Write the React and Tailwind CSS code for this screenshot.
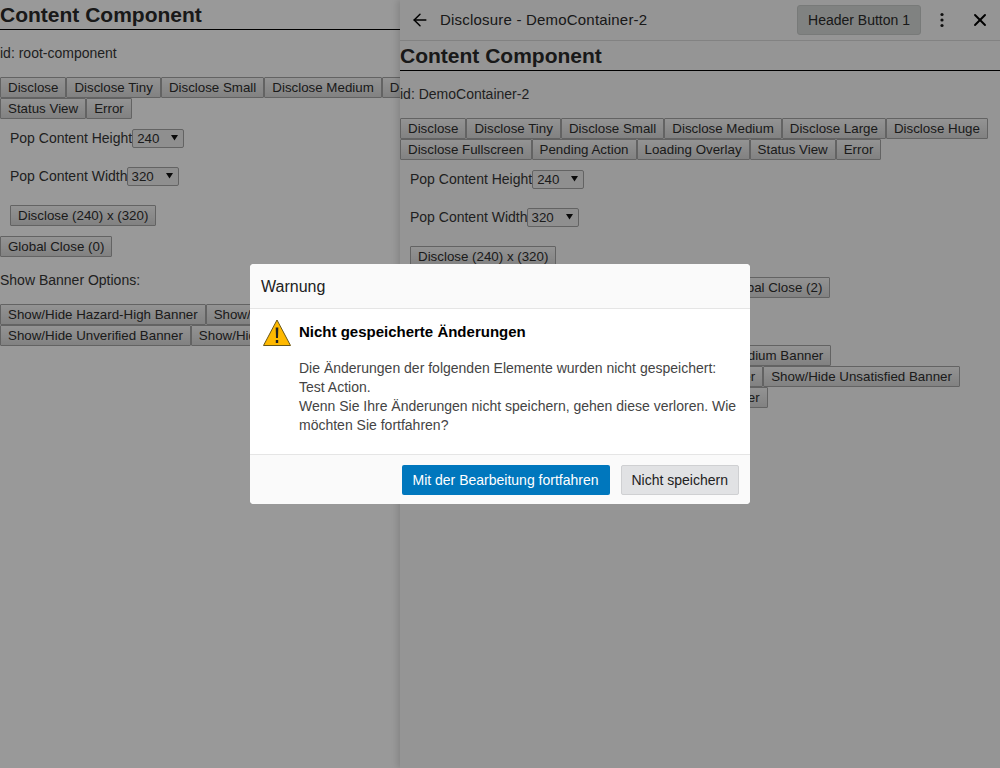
import { ArrowLeft, X } from 'lucide-react';

const sans = 'font-["Liberation_Sans",Arial,sans-serif]';

const mainButtons = ['Disclose', 'Disclose Tiny', 'Disclose Small', 'Disclose Medium', 'Disclose Large', 'Disclose Huge', 'Disclose Fullscreen', 'Pending Action', 'Loading Overlay', 'Status View', 'Error'];
const bannerButtons = ['Show/Hide Hazard-High Banner', 'Show/Hide Hazard-Medium Banner', 'Show/Hide Hazard-Low Banner', 'Show/Hide Error Banner', 'Show/Hide Unsatisfied Banner', 'Show/Hide Unverified Banner', 'Show/Hide Custom Banner'];

const DemoButton = ({ children, className = '' }) => (
  <button className={`h-[21px] px-[7px] border border-[#a6a6a6] rounded-[1px] bg-linear-to-b from-[#f6f6f6] to-[#d8d8d8] text-[13.33px] leading-[19px] text-[#2e2e2e] whitespace-nowrap ${className}`}>
    {children}
  </button>
);

const SizeSelect = ({ value, width }) => (
  <span className={`relative inline-block h-[19px] ${width}`}>
    <select defaultValue={value} className="appearance-none block w-full h-full pl-[4px] border border-[#a6a6a6] rounded-[2px] bg-[#efefef] text-[13.33px] leading-[17px] text-[#2e2e2e]">
      <option>{value}</option>
    </select>
    <svg className="absolute right-[6px] top-[5px]" width="7" height="7" viewBox="0 0 7 7">
      <path d="M0 1h7L3.5 6.5z" fill="#111" />
    </svg>
  </span>
);

const ContentComponent = ({ id, closeCount, closeOffset = '' }) => (
  <div className="text-[14px] text-[#363636]">
    <h2 className="h-[30px] border-b border-black text-[21px] leading-[29px] font-bold text-[#2a2a2a]">Content Component</h2>
    <p className="mt-[15px] h-[16px] leading-[16px]">id: {id}</p>
    <div className="mt-[16px] flex flex-wrap">
      {mainButtons.map((label) => (
        <DemoButton key={label}>{label}</DemoButton>
      ))}
    </div>
    <div className="mt-[10px] pl-[10px] flex items-center h-[19px]">
      <span>Pop Content Height</span>
      <SizeSelect value="240" width="w-[52px]" />
    </div>
    <div className="mt-[19px] pl-[10px] flex items-center h-[19px]">
      <span className="-mr-px">Pop Content Width</span>
      <SizeSelect value="320" width="w-[52px]" />
    </div>
    <div className="mt-[19px] pl-[10px] flex">
      <DemoButton>Disclose (240) x (320)</DemoButton>
    </div>
    <div className="mt-[10px] flex">
      <DemoButton className={closeOffset}>Global Close ({closeCount})</DemoButton>
    </div>
    <p className="mt-[15px] h-[16px] leading-[16px]">Show Banner Options:</p>
    <div className="mt-[16px] flex flex-wrap">
      {bannerButtons.map((label) => (
        <DemoButton key={label}>{label}</DemoButton>
      ))}
    </div>
  </div>
);

const WarningIcon = () => (
  <svg width="30" height="28" viewBox="0 0 30 28" className="shrink-0">
    <path d="M15 1 L28.5 26.5 H1.5 Z" fill="#ffb900" stroke="#6b5716" strokeWidth="1" strokeLinejoin="miter" />
    <path d="M13.7 8.5 H16.3 L16 19 H14 Z" fill="#222" />
    <rect x="13.8" y="21" width="2.4" height="3" fill="#222" />
  </svg>
);

const WarningDialog = () => (
  <div className="absolute left-[250px] top-[264px] w-[500px] h-[240px] flex flex-col rounded-[4px] bg-white overflow-hidden">
    <div className="h-[45px] shrink-0 flex items-center pl-[11px] pt-px border-b border-[#e5e5e5] bg-[#fafafa] text-[16px] text-[#212121]">Warnung</div>
    <div className="flex-1 flex gap-[7px] pl-[12px] pr-[12px] pt-[10px]">
      <WarningIcon />
      <div className="text-[14px] leading-[19px] text-[#444]">
        <div className="mt-[3px] text-[15px] leading-[19px] font-bold text-black">Nicht gespeicherte Änderungen</div>
        <p className="mt-[18px]">
          Die Änderungen der folgenden Elemente wurden nicht gespeichert:
          <br />
          Test Action.
          <br />
          Wenn Sie Ihre Änderungen nicht speichern, gehen diese verloren. Wie möchten Sie fortfahren?
        </p>
      </div>
    </div>
    <div className="h-[50px] shrink-0 flex items-center justify-end gap-[11px] pr-[11px] border-t border-[#e5e5e5] bg-[#fafafa] text-[14px]">
      <button className="h-[30px] px-[11px] pt-px rounded-[2px] bg-[#0077bd] text-white">Mit der Bearbeitung fortfahren</button>
      <button className="h-[30px] px-[10px] pt-px rounded-[2px] border border-[#cfd0d2] bg-[#e1e2e4] text-[#212121]">Nicht speichern</button>
    </div>
  </div>
);

const App = () => {
  return (
    <div className={`relative w-[1000px] h-[768px] overflow-hidden bg-white ${sans}`}>
      <ContentComponent id="root-component" closeCount={0} />

      <div className="absolute right-0 top-0 bottom-0 w-[600px] bg-[#f8f8f8] shadow-[-3px_0_6px_rgba(0,0,0,0.12)]">
        <div className="h-[41px] flex items-center border-b border-[#d9d9d9] text-[#2a2a2a]">
          <ArrowLeft size={20} strokeWidth={1.75} className="ml-[10px] text-black" />
          <span className="ml-[10px] text-[15px] tracking-[0.2px]">Disclosure - DemoContainer-2</span>
          <button className="ml-auto h-[30px] px-[10px] rounded-[3px] border border-[#c9ccca] bg-[#d5d9d7] text-[14px]">Header Button 1</button>
          <svg className="ml-[12px]" width="18" height="18" viewBox="0 0 18 18">
            <circle cx="9" cy="3.5" r="1.6" fill="#1a1a1a" />
            <circle cx="9" cy="9" r="1.6" fill="#1a1a1a" />
            <circle cx="9" cy="14.5" r="1.6" fill="#1a1a1a" />
          </svg>
          <X size={20} strokeWidth={2.25} className="ml-[19px] mr-[10px] text-black" />
        </div>
        <ContentComponent id="DemoContainer-2" closeCount={2} closeOffset="ml-[318px]" />
      </div>

      <div className="absolute inset-0 bg-black/40" />
      <WarningDialog />
    </div>
  );
};

export default App;
